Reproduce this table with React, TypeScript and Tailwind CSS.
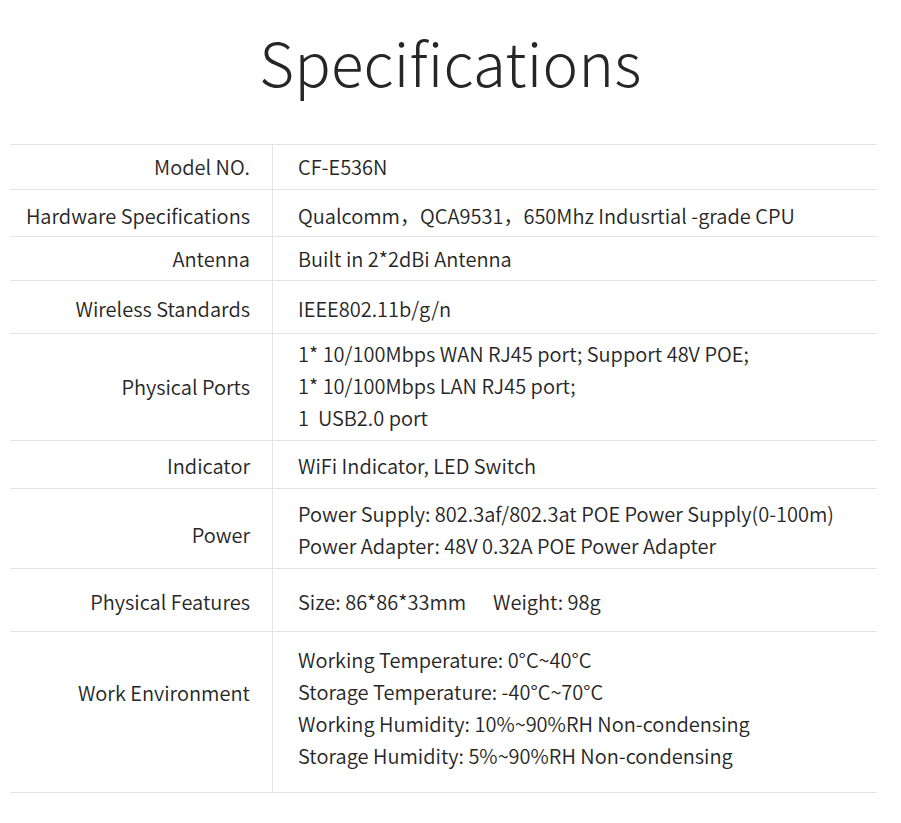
const specs: { label: string; lines: string[]; h: string; lp?: string; vp?: string }[] = [
  { label: 'Model NO.', lines: ['CF-E536N'], h: 'h-[45px]' },
  { label: 'Hardware Specifications', lines: ['Qualcomm，QCA9531，650Mhz Indusrtial -grade CPU'], h: 'h-[47px]', lp: 'pt-[5px]', vp: 'pt-[5px]' },
  { label: 'Antenna', lines: ['Built in 2*2dBi Antenna'], h: 'h-[44px]' },
  { label: 'Wireless Standards', lines: ['IEEE802.11b/g/n'], h: 'h-[53px]', lp: 'pt-[4px]', vp: 'pt-[4px]' },
  {
    label: 'Physical Ports',
    lines: ['1* 10/100Mbps WAN RJ45 port; Support 48V POE;', '1* 10/100Mbps LAN RJ45 port;', '1  USB2.0 port'],
    h: 'h-[107px]',
    vp: 'pb-[2px]',
  },
  { label: 'Indicator', lines: ['WiFi Indicator, LED Switch'], h: 'h-[48px]', lp: 'pt-[2px]', vp: 'pt-[2px]' },
  {
    label: 'Power',
    lines: ['Power Supply: 802.3af/802.3at POE Power Supply(0-100m)', 'Power Adapter: 48V 0.32A POE Power Adapter'],
    h: 'h-[80px]',
    lp: 'pt-[12px]',
    vp: 'pt-[2px]',
  },
  { label: 'Physical Features', lines: ['Size: 86*86*33mm      Weight: 98g'], h: 'h-[63px]', lp: 'pt-[4px]', vp: 'pt-[4px]' },
  {
    label: 'Work Environment',
    lines: [
      'Working Temperature: 0°C~40°C',
      'Storage Temperature: -40°C~70°C',
      'Working Humidity: 10%~90%RH Non-condensing',
      'Storage Humidity: 5%~90%RH Non-condensing',
    ],
    h: 'h-[161px]',
    lp: 'pb-[38px]',
    vp: 'pb-[8px] leading-[31.7px]',
  },
];

export default function App() {
  return (
    <div
      className="w-[901px] h-[823px] bg-white text-[#262626]"
      style={{ fontFamily: '"Noto Sans CJK SC", "Noto Sans", sans-serif' }}
    >
      <div className="h-[144px] flex items-center justify-center pb-[22px]">
        <h1 className="text-[60px] font-light leading-none tracking-[0.3px]">Specifications</h1>
      </div>

      <div className="mx-[10px] w-[867px] border-t border-[#e3e3e3]">
        {specs.map((s) => (
          <div key={s.label} className={`flex border-b border-[#e3e3e3] ${s.h}`}>
            <div
              className={`w-[263px] shrink-0 flex items-center justify-end pr-[22px] border-r border-[#e3e3e3] text-[20px] font-[350] ${s.lp ?? ''}`}
            >
              {s.label}
            </div>
            <div
              className={`flex-1 flex flex-col justify-center pl-[25px] text-[20px] font-[350] leading-[32px] whitespace-pre ${s.vp ?? ''}`}
            >
              {s.lines.map((l) => (
                <div key={l}>{l}</div>
              ))}
            </div>
          </div>
        ))}
      </div>
    </div>
  );
}
